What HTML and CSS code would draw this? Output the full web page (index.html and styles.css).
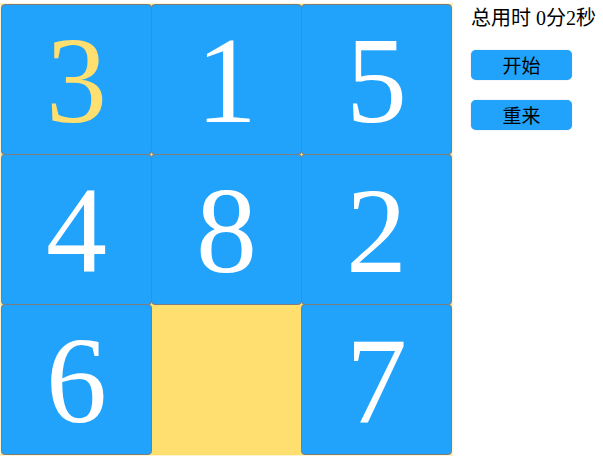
FILE: index.html
```html
<!DOCTYPE html>
<html>
<head>
<meta charset="utf-8">
<link rel="stylesheet" href="styles.css">
</head>
<body>
<div class="page">
  <div class="board-wrap">
    <div class="board">
      <div class="tile hit">3</div>
      <div class="tile">1</div>
      <div class="tile">5</div>
      <div class="tile">4</div>
      <div class="tile">8</div>
      <div class="tile">2</div>
      <div class="tile">6</div>
      <div class="empty"></div>
      <div class="tile">7</div>
    </div>
  </div>
  <div class="panel">
    <div class="timer">总用时 0分2秒</div>
    <button class="btn">开始</button>
    <button class="btn">重来</button>
  </div>
</div>
</body>
</html>
```
FILE: styles.css
```css
html, body {
  margin: 0;
  padding: 0;
  background: #ffffff;
}
.page {
  display: flex;
  align-items: flex-start;
  font-family: "Liberation Serif", "Noto Sans CJK SC", serif;
}
.board-wrap {
  margin-top: 3px;
  padding: 1px;
  background: #fff4cf;
}
.board {
  display: grid;
  grid-template-columns: 150px 150px 151px;
  grid-template-rows: 150px 150px 151px;
  background: #ffdf6f;
}
.tile {
  width: 151px;
  height: 151px;
  box-sizing: border-box;
  border: 1px solid #7d7d7d;
  border-radius: 4px;
  background: #21a3fc;
  color: #ffffff;
  font-family: "Liberation Serif", "Times New Roman", serif;
  font-size: 122px;
  line-height: 151px;
  text-align: center;
}
.tile.hit {
  color: #ffdf6f;
}
.panel {
  display: flex;
  flex-direction: column;
  align-items: flex-start;
  padding-left: 18px;
  padding-top: 5px;
}
.timer {
  font-size: 20px;
  line-height: 26px;
  color: #000;
  white-space: nowrap;
}
.btn {
  width: 101px;
  height: 30px;
  margin-top: 19px;
  border: none;
  border-radius: 5px;
  background: #21a3fc;
  box-shadow: 0 0 1px rgba(0, 80, 160, 0.5);
  color: #000;
  font-family: "Noto Sans CJK SC", sans-serif;
  font-size: 19px;
  line-height: 30px;
  padding: 0;
}
.btn + .btn {
  margin-top: 20px;
}
```
